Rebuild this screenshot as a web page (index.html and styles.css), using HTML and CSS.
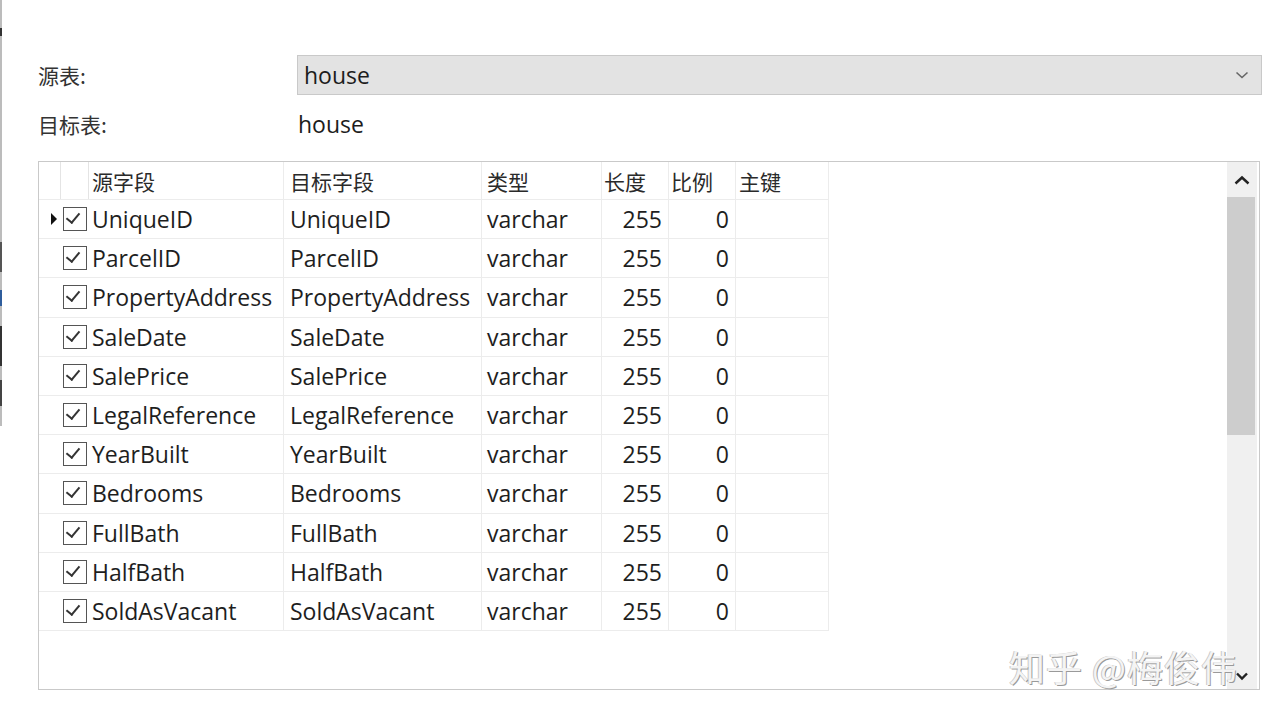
FILE: index.html
```html
<!DOCTYPE html>
<html>
<head>
<meta charset="utf-8">
<link rel="stylesheet" href="styles.css">
</head>
<body>
<div class="edge"><span class="mark m1"></span><span class="mark m2"></span><span class="mark m3"></span><span class="mark m4"></span><span class="mark m5"></span></div>
<div class="content">
  <div class="form">
    <div class="label">源表:</div>
    <div class="select"><span class="sel-text">house</span>
      <svg class="chev" width="14" height="10" viewBox="0 0 14 10"><path d="M1.5 2.5 L7 7.5 L12.5 2.5" fill="none" stroke="#666" stroke-width="1.6"/></svg>
    </div>
    <div class="label">目标表:</div>
    <div class="value">house</div>
  </div>
  <div class="table">
    <div class="grid">
      <div class="row head">
        <div class="c c0"></div><div class="c c1"></div>
        <div class="c c2">源字段</div><div class="c c3">目标字段</div><div class="c c4">类型</div>
        <div class="c c5 hl">长度</div><div class="c c6 hl">比例</div><div class="c c7">主键</div>
      </div>
      <div class="row"><div class="c c0"><span class="cur"></span></div><div class="c c1"><span class="cb"></span></div><div class="c c2">UniqueID</div><div class="c c3">UniqueID</div><div class="c c4">varchar</div><div class="c c5 n">255</div><div class="c c6 n">0</div><div class="c c7"></div></div>
      <div class="row"><div class="c c0"></div><div class="c c1"><span class="cb"></span></div><div class="c c2">ParcelID</div><div class="c c3">ParcelID</div><div class="c c4">varchar</div><div class="c c5 n">255</div><div class="c c6 n">0</div><div class="c c7"></div></div>
      <div class="row"><div class="c c0"></div><div class="c c1"><span class="cb"></span></div><div class="c c2">PropertyAddress</div><div class="c c3">PropertyAddress</div><div class="c c4">varchar</div><div class="c c5 n">255</div><div class="c c6 n">0</div><div class="c c7"></div></div>
      <div class="row"><div class="c c0"></div><div class="c c1"><span class="cb"></span></div><div class="c c2">SaleDate</div><div class="c c3">SaleDate</div><div class="c c4">varchar</div><div class="c c5 n">255</div><div class="c c6 n">0</div><div class="c c7"></div></div>
      <div class="row"><div class="c c0"></div><div class="c c1"><span class="cb"></span></div><div class="c c2">SalePrice</div><div class="c c3">SalePrice</div><div class="c c4">varchar</div><div class="c c5 n">255</div><div class="c c6 n">0</div><div class="c c7"></div></div>
      <div class="row"><div class="c c0"></div><div class="c c1"><span class="cb"></span></div><div class="c c2">LegalReference</div><div class="c c3">LegalReference</div><div class="c c4">varchar</div><div class="c c5 n">255</div><div class="c c6 n">0</div><div class="c c7"></div></div>
      <div class="row"><div class="c c0"></div><div class="c c1"><span class="cb"></span></div><div class="c c2">YearBuilt</div><div class="c c3">YearBuilt</div><div class="c c4">varchar</div><div class="c c5 n">255</div><div class="c c6 n">0</div><div class="c c7"></div></div>
      <div class="row"><div class="c c0"></div><div class="c c1"><span class="cb"></span></div><div class="c c2">Bedrooms</div><div class="c c3">Bedrooms</div><div class="c c4">varchar</div><div class="c c5 n">255</div><div class="c c6 n">0</div><div class="c c7"></div></div>
      <div class="row"><div class="c c0"></div><div class="c c1"><span class="cb"></span></div><div class="c c2">FullBath</div><div class="c c3">FullBath</div><div class="c c4">varchar</div><div class="c c5 n">255</div><div class="c c6 n">0</div><div class="c c7"></div></div>
      <div class="row"><div class="c c0"></div><div class="c c1"><span class="cb"></span></div><div class="c c2">HalfBath</div><div class="c c3">HalfBath</div><div class="c c4">varchar</div><div class="c c5 n">255</div><div class="c c6 n">0</div><div class="c c7"></div></div>
      <div class="row"><div class="c c0"></div><div class="c c1"><span class="cb"></span></div><div class="c c2">SoldAsVacant</div><div class="c c3">SoldAsVacant</div><div class="c c4">varchar</div><div class="c c5 n">255</div><div class="c c6 n">0</div><div class="c c7"></div></div>
    </div>
    <div class="scroll">
      <div class="sbtn"><svg width="18" height="12" viewBox="0 0 18 12"><path d="M2.5 9.5 L9 3.5 L15.5 9.5" fill="none" stroke="#222" stroke-width="2.4"/></svg></div>
      <div class="thumb"></div>
      <div class="track"></div>
      <div class="sbtn down"><svg width="14" height="10" viewBox="0 0 14 10"><path d="M2 2.5 L7 7.5 L12 2.5" fill="none" stroke="#222" stroke-width="2.4"/></svg></div>
    </div>
    <div class="wm">知乎 @梅俊伟</div>
  </div>
</div>
</body>
</html>
```
FILE: styles.css
```css
html, body {
  margin: 0;
  padding: 0;
  background: #fff;
}
body {
  width: 1280px;
  height: 720px;
  overflow: hidden;
  display: flex;
  align-items: flex-start;
  font-family: "Open Sans", "Noto Sans CJK SC", sans-serif;
  color: #222;
}
.edge {
  width: 2px;
  height: 426px;
  flex: none;
  background: #bcbcbc;
  display: flex;
  flex-direction: column;
}
.mark {
  display: block;
  background: #333;
  width: 2px;
}
.m1 { height: 8px; margin-top: 28px; }
.m2 { height: 30px; margin-top: 206px; background: #555; }
.m3 { height: 16px; margin-top: 18px; background: #2f5d9c; }
.m4 { height: 40px; margin-top: 20px; }
.m5 { height: 26px; margin-top: 14px; background: #444; }
.content {
  flex: 1;
  padding: 54px 20px 0 36px;
}
.form {
  display: grid;
  grid-template-columns: 259px 965px;
  grid-template-rows: 42px 56px;
  align-items: center;
}
.label {
  font-family: "Noto Sans CJK SC", sans-serif;
  font-size: 21px;
  color: #333;
}
.select {
  height: 40px;
  background: #e3e3e3;
  border: 1px solid #c9c9c9;
  display: flex;
  align-items: center;
  justify-content: space-between;
  padding: 0 12px 0 6px;
  box-sizing: border-box;
}
.sel-text, .value {
  font-size: 23px;
  color: #1c1c1c;
}
.value { padding-left: 1px; }
.table {
  position: relative;
  margin-top: 9px;
  width: 1222px;
  height: 529px;
  border: 1px solid #c9c9c9;
  box-sizing: border-box;
  display: flex;
  justify-content: space-between;
}
.grid {
  display: flex;
  flex-direction: column;
}
.row {
  display: flex;
  height: 39.2px;
  border-bottom: 1px solid #ececec;
  box-sizing: border-box;
}
.row.head { height: 38px; }
.c {
  box-sizing: border-box;
  border-right: 1px solid #ececec;
  display: flex;
  align-items: center;
  font-size: 23px;
  color: #1e1e1e;
  white-space: nowrap;
  overflow: hidden;
  padding-left: 3px;
}
.head .c {
  font-family: "Noto Sans CJK SC", sans-serif;
  font-size: 21px;
  color: #2a2a2a;
}
.c0 { width: 22px; padding: 0; justify-content: flex-end; border-right: none; }
.c1 { width: 28px; padding: 0 0 0 2px; border-right: none; }
.head .c0, .head .c1 { border-right: 1px solid #e4e4e4; }
.c2 { width: 195px; }
.c3 { width: 198px; padding-left: 6px; }
.c4 { width: 120px; padding-left: 5px; }
.c5 { width: 67px; }
.c6 { width: 67px; }
.c7 { width: 93px; }
.n { justify-content: flex-end; padding-right: 6px; }
.head .hl { padding-left: 2px; }
.cur {
  width: 0;
  height: 0;
  border-left: 6px solid #111;
  border-top: 6px solid transparent;
  border-bottom: 6px solid transparent;
  margin-right: 4px;
}
.cb {
  width: 24px;
  height: 24px;
  box-sizing: border-box;
  border: 1.5px solid #555;
  position: relative;
  background: #fff;
}
.cb::after {
  content: "";
  position: absolute;
  left: 5px;
  top: 2px;
  width: 6px;
  height: 11px;
  border-right: 2px solid #333;
  border-bottom: 2px solid #333;
  transform: rotate(40deg);
}
.scroll {
  width: 30px;
  display: flex;
  flex-direction: column;
  background: #f0f0f0;
  margin-right: 2px;
}
.sbtn {
  height: 35px;
  display: flex;
  align-items: center;
  justify-content: center;
  background: #f0f0f0;
}
.sbtn.down { height: 30px; align-items: flex-end; padding-bottom: 8px; box-sizing: border-box; }
.thumb {
  height: 238px;
  background: #cdcdcd;
  margin: 0 2px 0 0;
}
.track { flex: 1; }
.wm {
  position: absolute;
  left: 970px;
  top: 478px;
  font-family: "Noto Sans CJK SC", sans-serif;
  font-size: 36px;
  letter-spacing: 1px;
  color: #f4f4f4;
  text-shadow: 1px 1px 0 #9a9a9a, -1px 0 0 #c8c8c8;
  white-space: nowrap;
}
```
